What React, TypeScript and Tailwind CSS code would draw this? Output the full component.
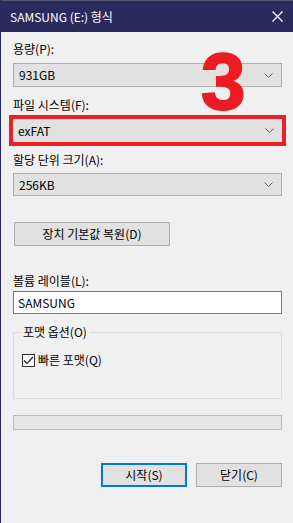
import React from "react";

const font = { fontFamily: '"Noto Sans CJK KR", "Noto Sans", sans-serif' };

function Chevron() {
  return (
    <svg width="9" height="5" viewBox="0 0 9 5" className="shrink-0">
      <path d="M0.5 0.5 L4.5 4.5 L8.5 0.5" fill="none" stroke="#606060" strokeWidth="1" />
    </svg>
  );
}

function Select({ value, className = "" }: { value: string; className?: string }) {
  return (
    <div className={`flex items-center justify-between bg-[#e1e1e1] pl-[5px] pr-[8px] text-[12px] leading-[16px] text-black ${className}`}>
      <span>{value}</span>
      <Chevron />
    </div>
  );
}

export default function App() {
  return (
    <div style={font} className="relative w-[293px] h-[523px] overflow-hidden bg-[#f0f0f0] border-l border-[#2b2a5e] text-black">
      {/* Title bar */}
      <div className="h-[32px] bg-[#2b2a5e] border-t border-[#55546f] flex items-center justify-between pl-[9px] pr-[10px]">
        <span className="text-white text-[12px] leading-[16px]">SAMSUNG (E:) 형식</span>
        <svg width="11" height="11" viewBox="0 0 11 11">
          <path d="M0.5 0.5 L10.5 10.5 M10.5 0.5 L0.5 10.5" stroke="#ffffff" strokeWidth="1.2" />
        </svg>
      </div>

      <div className="pl-[12px] pr-[11px] flex flex-col">
        <div className="mt-[9px] text-[12px] leading-[16px]">용량(P):</div>
        <Select value="931GB" className="mt-[6px] h-[24px] border border-[#adadad]" />

        <div className="mt-[10px] text-[12px] leading-[16px]">파일 시스템(F):</div>
        <div className="mt-[2px] -mx-[4px] border-[4px] border-[#e8202a]">
          <Select value="exFAT" className="h-[23px]" />
        </div>

        <div className="mt-[6px] text-[12px] leading-[16px]">할당 단위 크기(A):</div>
        <Select value="256KB" className="mt-[5px] h-[23px] border border-[#adadad]" />

        <div className="mt-[26px] ml-[1px] w-[156px] h-[24px] bg-[#e1e1e1] border border-[#adadad] flex items-center justify-center text-[12px] leading-[16px]">
          장치 기본값 복원(D)
        </div>

        <div className="mt-[27px] text-[12px] leading-[16px]">볼륨 레이블(L):</div>
        <div className="mt-[2px] h-[23px] bg-white border border-[#7a7a7a] flex items-center pl-[4px] text-[12px] leading-[16px]">
          SAMSUNG
        </div>

        <div className="mt-[18px] relative h-[67px] border border-[#dcdcdc]">
          <span className="absolute -top-[9px] left-[6px] bg-[#f0f0f0] px-[3px] text-[12px] leading-[16px]">포맷 옵션(O)</span>
          <div className="absolute top-[19px] left-[8px] flex items-center gap-[3px]">
            <div className="w-[13px] h-[13px] bg-white border border-[#333333] flex items-center justify-center">
              <svg width="11" height="9" viewBox="0 0 11 9">
                <path d="M1 4.5 L4 7.5 L10 1" fill="none" stroke="#222222" strokeWidth="1.2" />
              </svg>
            </div>
            <span className="text-[12px] leading-[16px]">빠른 포맷(Q)</span>
          </div>
        </div>

        <div className="mt-[16px] h-[15px] bg-[#e6e6e6] border border-[#bcbcbc]" />

        <div className="mt-[33px] flex justify-end gap-[9px]">
          <div className="w-[86px] h-[24px] bg-[#e1e1e1] border-2 border-[#0078d7] flex items-center justify-center text-[12px] leading-[16px]">
            시작(S)
          </div>
          <div className="w-[86px] h-[24px] bg-[#e1e1e1] border border-[#adadad] flex items-center justify-center text-[12px] leading-[16px]">
            닫기(C)
          </div>
        </div>
      </div>

      {/* annotation */}
      <div
        className="absolute left-[200px] top-[32px] text-[80px] leading-[100px] font-black text-[#ed1c24] [-webkit-text-stroke:2px_#ed1c24]"
        style={{ fontFamily: '"Liberation Sans", Arial, sans-serif' }}
      >
        3
      </div>
    </div>
  );
}
